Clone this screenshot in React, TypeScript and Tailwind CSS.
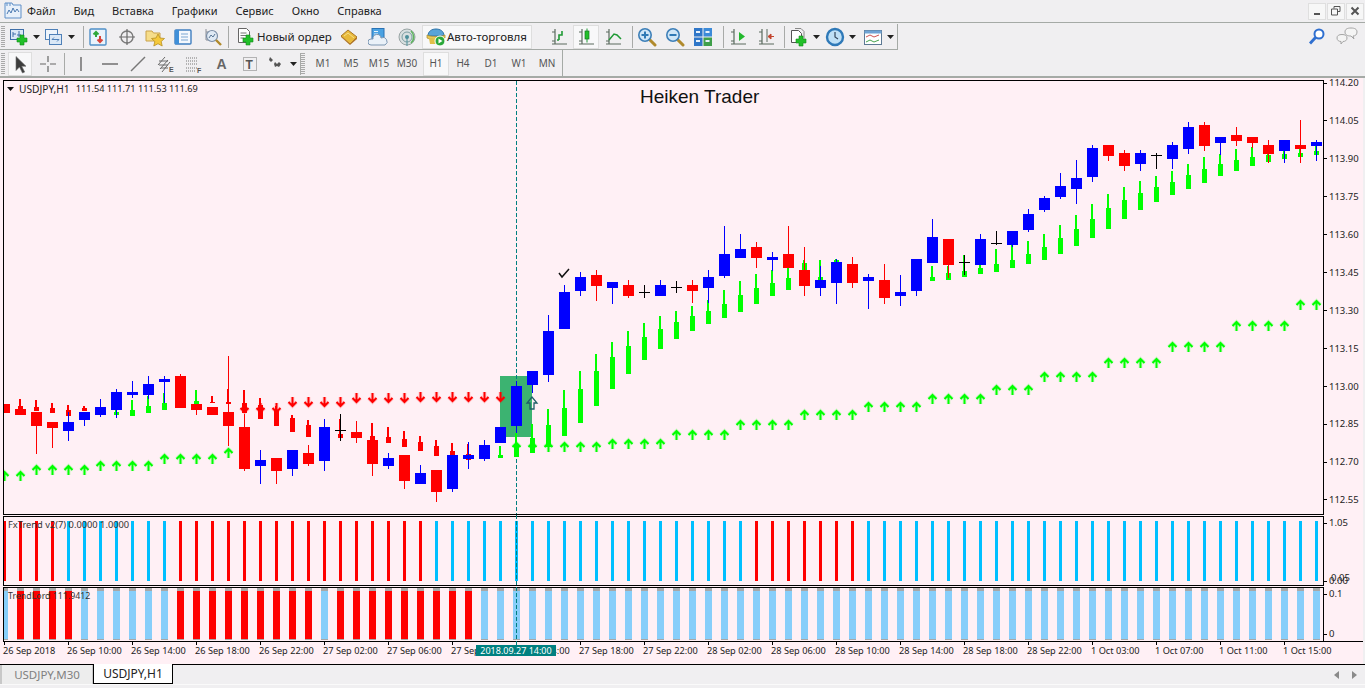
import type { ReactNode } from 'react'

const CHART_FONT = "font-['Noto_Sans',sans-serif]"

// [colour, body top, body bottom, wick top, wick bottom], index = bar number (x = 4 + 16k)
const BARS: [string, number, number, number, number][] = [
  ['r', 404, 413, 404, 413], ['r', 409, 415, 409, 415], ['r', 412, 426, 412, 454], ['r', 422, 428, 422, 448],
  ['b', 422, 431, 412, 441], ['b', 412, 420, 412, 426], ['b', 407, 415, 399, 417], ['b', 392, 410, 389, 418],
  ['b', 392, 395, 381, 398], ['b', 384, 395, 376, 399], ['b', 379, 382, 376, 403], ['r', 376, 408, 374, 408],
  ['r', 404, 410, 404, 415], ['r', 407, 415, 407, 415], ['r', 412, 426, 356, 446], ['r', 427, 469, 414, 471],
  ['b', 460, 466, 450, 484], ['r', 458, 471, 458, 484], ['b', 450, 469, 450, 476], ['r', 453, 464, 445, 466],
  ['b', 427, 461, 419, 471], ['d', 430, 430, 414, 441], ['r', 432, 438, 421, 443], ['r', 440, 464, 440, 476],
  ['b', 458, 466, 453, 469], ['r', 455, 481, 455, 489], ['b', 473, 484, 465, 484], ['r', 470, 492, 470, 502],
  ['b', 455, 489, 455, 492], ['b', 455, 459, 442, 469], ['b', 445, 459, 440, 461], ['b', 427, 443, 427, 443],
  ['b', 386, 426, 381, 433], ['b', 371, 385, 371, 393], ['b', 331, 375, 315, 382], ['b', 292, 329, 285, 329],
  ['b', 277, 291, 272, 296], ['r', 275, 286, 270, 301], ['b', 282, 288, 282, 304], ['r', 285, 296, 280, 298],
  ['d', 292, 292, 285, 298], ['b', 285, 296, 280, 296], ['d', 287, 287, 281, 293], ['r', 285, 291, 280, 303],
  ['b', 277, 288, 270, 303], ['b', 254, 276, 226, 278], ['b', 249, 258, 234, 258], ['r', 247, 258, 242, 268],
  ['b', 257, 260, 252, 271], ['r', 254, 268, 226, 268], ['r', 270, 286, 247, 296], ['b', 280, 288, 266, 296],
  ['b', 262, 283, 259, 304], ['r', 264, 283, 257, 288], ['b', 277, 281, 274, 309], ['r', 280, 298, 264, 304],
  ['b', 292, 296, 275, 306], ['b', 259, 291, 259, 296], ['b', 237, 263, 219, 263], ['r', 239, 265, 239, 278],
  ['d', 262, 262, 255, 275], ['b', 239, 265, 234, 265], ['d', 243, 243, 231, 245], ['b', 231, 245, 231, 247],
  ['b', 214, 230, 209, 232], ['b', 198, 210, 196, 212], ['b', 186, 197, 173, 199], ['b', 178, 189, 160, 204],
  ['b', 148, 177, 145, 182], ['r', 145, 156, 145, 161], ['r', 153, 166, 150, 171], ['b', 153, 164, 150, 171],
  ['d', 155, 155, 153, 169], ['b', 145, 159, 142, 169], ['b', 127, 149, 122, 154], ['r', 125, 146, 122, 151],
  ['b', 137, 143, 137, 155], ['r', 135, 141, 127, 146], ['r', 137, 143, 137, 148], ['r', 145, 154, 140, 163],
  ['b', 140, 151, 140, 163], ['r', 145, 149, 120, 163], ['b', 142, 146, 140, 161],
]

// smaller candles drawn under the main ones: [bar, colour, wick top, body top, body bottom]
const SMALL: [number, string, number, number, number][] = [
  [1, '#ff0000', 399, 406, 409], [2, '#ff0000', 400, 407, 411], [3, '#ff0000', 403, 408, 413], [4, '#ff0000', 405, 410, 416],
  [5, '#ff0000', 406, 408, 411], [7, '#00ff00', 410, 412, 415], [8, '#00ff00', 400, 410, 416], [9, '#00ff00', 396, 406, 413],
  [10, '#00ff00', 393, 403, 410], [12, '#00ff00', 390, 401, 405], [13, '#ff0000', 396, 402, 403], [14, '#ff0000', 389, 402, 404],
  [15, '#ff0000', 390, 403, 413], [16, '#ff0000', 398, 405, 419], [17, '#ff0000', 406, 410, 426], [18, '#ff0000', 415, 418, 432],
  [19, '#ff0000', 420, 425, 437], [21, '#ff0000', 419, 434, 438], [23, '#ff0000', 423, 436, 440], [24, '#ff0000', 427, 437, 443],
  [25, '#ff0000', 431, 439, 447], [26, '#ff0000', 436, 442, 451], [27, '#ff0000', 440, 446, 456], [28, '#ff0000', 443, 451, 455],
  [29, '#ff0000', 444, 454, 460], [31, '#00ff00', 446, 455, 458], [32, '#00ff00', 433, 445, 457], [33, '#00ff00', 424, 438, 453],
  [34, '#00ff00', 409, 425, 447], [35, '#00ff00', 390, 408, 436], [36, '#00ff00', 371, 389, 423], [37, '#00ff00', 354, 371, 406],
  [38, '#00ff00', 342, 357, 389], [39, '#00ff00', 331, 346, 374], [40, '#00ff00', 323, 337, 360], [41, '#00ff00', 316, 329, 349],
  [42, '#00ff00', 311, 322, 339], [43, '#00ff00', 306, 316, 331], [44, '#00ff00', 300, 311, 324], [45, '#00ff00', 290, 304, 318],
  [46, '#00ff00', 281, 295, 312], [47, '#00ff00', 274, 288, 304], [48, '#00ff00', 270, 283, 296], [49, '#00ff00', 268, 278, 290],
  [50, '#00ff00', 260, 263, 270], [51, '#00ff00', 260, 277, 280], [52, '#00ff00', 259, 260, 262], [58, '#00ff00', 266, 277, 281],
  [59, '#00ff00', 266, 273, 280], [60, '#00ff00', 255, 271, 277], [61, '#00ff00', 262, 268, 274], [62, '#00ff00', 249, 264, 272],
  [63, '#00ff00', 245, 260, 268], [64, '#00ff00', 241, 254, 264], [65, '#00ff00', 234, 247, 260], [66, '#00ff00', 225, 238, 254],
  [67, '#00ff00', 215, 229, 246], [68, '#00ff00', 204, 219, 238], [69, '#00ff00', 194, 208, 229], [70, '#00ff00', 187, 200, 219],
  [71, '#00ff00', 181, 193, 210], [72, '#00ff00', 176, 187, 202], [73, '#00ff00', 171, 182, 195], [74, '#00ff00', 164, 175, 189],
  [75, '#00ff00', 157, 169, 183], [76, '#00ff00', 154, 164, 176], [77, '#00ff00', 149, 160, 171], [78, '#00ff00', 147, 157, 166],
  [79, '#00ff00', 150, 155, 162], [80, '#00ff00', 150, 154, 159], [81, '#00ff00', 146, 153, 157], [82, '#00ff00', 146, 151, 155],
]

// [first bar, how many, y]
const UP_ARROWS: [number, number, number][] = [
  [0, 2, 476], [2, 4, 470], [6, 4, 466], [10, 4, 459], [14, 1, 453], [32, 6, 447], [38, 4, 444], [42, 4, 435], [46, 4, 425],
  [50, 4, 415], [54, 4, 407], [58, 4, 399], [62, 3, 390], [65, 4, 377], [69, 4, 363], [73, 4, 347], [77, 4, 326], [81, 2, 305],
]
const DOWN_ARROWS: [number, number, number][] = [[15, 3, 408], [18, 4, 402], [22, 4, 398], [26, 6, 397]]

const PRICES = ['114.20', '114.05', '113.90', '113.75', '113.60', '113.45', '113.30', '113.15', '113.00', '112.85', '112.70', '112.55']

const TIMES = [
  '26 Sep 2018', '26 Sep 10:00', '26 Sep 14:00', '26 Sep 18:00', '26 Sep 22:00', '27 Sep 02:00', '27 Sep 06:00',
  '27 Sep 10:00', '27 Sep 14:00', '27 Sep 18:00', '27 Sep 22:00', '28 Sep 02:00', '28 Sep 06:00', '28 Sep 10:00',
  '28 Sep 14:00', '28 Sep 18:00', '28 Sep 22:00', '1 Oct 03:00', '1 Oct 07:00', '1 Oct 11:00', '1 Oct 15:00',
]

const barIndexes = Array.from({ length: 83 }, (_, k) => k)
const expand = (list: [number, number, number][]) =>
  list.flatMap(([from, n, y]) => Array.from({ length: n }, (_, i) => [from + i, y]))

const fxIsRed = (k: number) => k <= 3 || (k >= 11 && k <= 26) || (k >= 47 && k <= 53)
const lordIsRed = (k: number) => (k >= 1 && k <= 4) || (k >= 11 && k <= 19) || (k >= 21 && k <= 29)

function Ico({ children, w = 20 }: { children: ReactNode; w?: number }) {
  return (
    <svg width={w} height="20" viewBox={`0 0 ${w} 20`} className="block shrink-0">
      {children}
    </svg>
  )
}

const Plus = ({ x = 9, y = 9 }: { x?: number; y?: number }) => (
  <path d={`M${x + 3} ${y}h4v3h3v4h-3v3h-4v-3h-3v-4h3z`} fill="#22c02a" stroke="#128a18" strokeWidth="0.6" />
)

const Axes = ({ color = '#5a6a5e' }: { color?: string }) => (
  <path d="M6 2v15M3 5h3M3 17h15M6 14H3" fill="none" stroke={color} strokeWidth="1.2" />
)

const Lens = ({ sign }: { sign: 'in' | 'out' }) => (
  <>
    <path d="M12 12l6 6" stroke="#b08a2c" strokeWidth="3" strokeLinecap="round" />
    <circle cx="8" cy="8" r="6.2" fill="#cfe6f7" stroke="#3d7fb8" strokeWidth="1.6" />
    <path d={sign === 'in' ? 'M4.5 8h7M8 4.5v7' : 'M4.5 8h7'} stroke="#2f79b5" strokeWidth="2" />
  </>
)

const ICONS: Record<string, ReactNode> = {
  app: (
    <Ico>
      <path d="M2 2h7l1 2h8v13H2z" fill="#e8f0fa" stroke="#5e8fc8" />
      <path d="M4 2v3M7 2v3" stroke="#5e8fc8" />
      <path d="M4 13l2-4 2 3 2-5 2 4 2-3 2 3" fill="none" stroke="#4a78b0" />
    </Ico>
  ),
  newChart: (
    <Ico>
      <rect x="1.5" y="2.5" width="13" height="10" fill="#dbe8f6" stroke="#3f6fa8" />
      <path d="M4 5v5M4 7H7M10 4v6M8 8h4" stroke="#3f6fa8" />
      <Plus x={8} y={8} />
    </Ico>
  ),
  profiles: (
    <Ico>
      <rect x="1.5" y="2.5" width="12" height="10" fill="#eef4fb" stroke="#4f80b8" />
      <rect x="5.5" y="7.5" width="12" height="10" fill="#dbe8f6" stroke="#4f80b8" />
      <path d="M8 12.5h7M8 12.5l2-2M15 12.5l-2 2" fill="none" stroke="#4f80b8" />
    </Ico>
  ),
  market: (
    <Ico>
      <rect x="2" y="2" width="16" height="16" rx="1" fill="#eaf3fb" stroke="#4f90c8" strokeWidth="1.4" />
      <path d="M8 10V5M5.5 7.5L8 5l2.5 2.5" fill="none" stroke="#2fa83a" strokeWidth="2" />
      <path d="M12 9v6M9.5 12.5L12 15l2.5-2.5" fill="none" stroke="#d8433a" strokeWidth="2" />
    </Ico>
  ),
  cross: (
    <Ico>
      <circle cx="10" cy="10" r="6" fill="none" stroke="#7b7b7b" strokeWidth="1.4" />
      <path d="M10 2v16M2 10h16" stroke="#6a6a6a" strokeWidth="1.2" />
    </Ico>
  ),
  folder: (
    <Ico>
      <path d="M1 4h6l1.500 2H15v8H1z" fill="#f6dd8a" stroke="#c9a24a" />
      <path d="M13 7l2 4 4.500.5-3.300 3 1 4.500L13 16.700 8.800 19l1-4.500-3.300-3L11 11z" fill="#f5c93c" stroke="#b88f22" strokeWidth=".8" />
    </Ico>
  ),
  book: (
    <Ico>
      <rect x="2" y="3" width="16" height="14" rx="1" fill="#f4f8fd" stroke="#3f7fc0" strokeWidth="1.4" />
      <rect x="2" y="3" width="4" height="14" fill="#3f8fd8" />
      <path d="M8 7h7M8 10h7M8 13h7" stroke="#7aa6d2" />
    </Ico>
  ),
  chartMag: (
    <Ico>
      <path d="M4 2v11h10M4 5h10" fill="none" stroke="#8b8f98" />
      <circle cx="10" cy="9" r="5.500" fill="#dfe9f4" stroke="#7b8ea6" strokeWidth="1.2" />
      <path d="M7 11l2-3 2 2 2-3" fill="none" stroke="#5a7796" />
      <path d="M14 13l5 5" stroke="#b08a2c" strokeWidth="2.400" />
    </Ico>
  ),
  order: (
    <Ico>
      <path d="M3.500 1.500h8l3 3v11h-11z" fill="#fff" stroke="#666" />
      <path d="M5.500 6h6M5.500 8.500h6M5.500 11h3" stroke="#777" />
      <Plus x={8} y={8} />
    </Ico>
  ),
  gold: (
    <Ico>
      <path d="M2 9l7-6 9 7-7 7z" fill="#e8b93a" stroke="#a9772a" />
      <path d="M2 9l9 8 7-7v2l-7 6-9-8z" fill="#b4782c" />
      <path d="M5 9l4-3 6 5" fill="none" stroke="#f6de8a" />
    </Ico>
  ),
  server: (
    <Ico>
      <rect x="4" y="1.500" width="12" height="11" fill="#4ba2e2" stroke="#2a72b4" />
      <path d="M6 4.500h4M6 7h4M6 9.500h4" stroke="#e6f3fc" />
      <path d="M3 18a3 3 0 0 1 0-6h2a4 4 0 0 1 8-1 3.500 3.500 0 0 1 4 7z" fill="#eaf1f8" stroke="#7c97b3" />
    </Ico>
  ),
  signal: (
    <Ico>
      <circle cx="10" cy="10" r="8" fill="#d8dfe0" stroke="#98a4a4" />
      <circle cx="10" cy="10" r="5" fill="none" stroke="#7c9ea2" />
      <circle cx="10" cy="10" r="2" fill="#4c8f9a" />
      <path d="M14 4a8 8 0 0 1 0 12" fill="none" stroke="#5eb55e" strokeWidth="1.600" />
      <path d="M10 11v8" stroke="#4c8f9a" />
    </Ico>
  ),
  auto: (
    <Ico>
      <path d="M2 9C2 4 6 2 10 2s8 2 8 7z" fill="#58a4d8" stroke="#2f73a8" />
      <path d="M1 8c4 2 14 2 18 0v3c-4 2-14 2-18 0z" fill="#e9c956" stroke="#a8892a" strokeWidth=".7" />
      <path d="M3 11l1 6h7v-5z" fill="#e0c04a" />
      <circle cx="14" cy="14" r="5" fill="#2aa83a" stroke="#fff" />
      <path d="M12.500 11.500l4 2.500-4 2.500z" fill="#fff" />
    </Ico>
  ),
  bars: (
    <Ico>
      <Axes />
      <path d="M10 13V8h3V4" fill="none" stroke="#1f9a35" strokeWidth="1.600" />
      <path d="M10 13H8" stroke="#1f9a35" strokeWidth="1.600" />
    </Ico>
  ),
  candles: (
    <Ico>
      <Axes />
      <path d="M11 1.500v14" stroke="#1f9a35" />
      <rect x="9" y="4" width="4" height="8" fill="#22c02a" stroke="#157a20" strokeWidth=".7" />
    </Ico>
  ),
  line: (
    <Ico>
      <Axes />
      <path d="M6 13l5-6 3 1 4 4" fill="none" stroke="#1f9a35" strokeWidth="1.500" />
    </Ico>
  ),
  zoomIn: <Ico><Lens sign="in" /></Ico>,
  zoomOut: <Ico><Lens sign="out" /></Ico>,
  grid: (
    <Ico>
      <rect x="1" y="1" width="8.500" height="8.500" fill="#2f76c8" />
      <rect x="10.500" y="1" width="8.500" height="8.500" fill="#3c8ad8" />
      <rect x="1" y="10.500" width="8.500" height="8.500" fill="#2f76c8" />
      <rect x="10.500" y="10.500" width="8.500" height="8.500" fill="#3f9f4a" />
      <path d="M3 4h4v2H3zM12.500 4h4v2h-4zM3 13h4v2H3zM12.500 13h4v2h-4z" fill="#e9f2fb" />
    </Ico>
  ),
  shift: (
    <Ico>
      <Axes />
      <path d="M11 5l6 4.500-6 4.500z" fill="#22b82c" />
    </Ico>
  ),
  scroll: (
    <Ico>
      <Axes />
      <path d="M11 2v13" stroke="#5a6a5e" />
      <path d="M18 9.500h-4M17 9.500l-4 0M15 7l-3 2.500 3 2.500z" stroke="#c2452e" fill="#c2452e" />
    </Ico>
  ),
  docPlus: (
    <Ico>
      <path d="M2.500 3.500h7l3 3v9h-10z" fill="#fff" stroke="#555" />
      <path d="M6 1.500h6l3 3v7" fill="none" stroke="#888" />
      <Plus x={7} y={9} />
    </Ico>
  ),
  clock: (
    <Ico>
      <circle cx="10" cy="10" r="8" fill="#bfe0f6" stroke="#2f79b8" strokeWidth="2.400" />
      <path d="M10 5v5l3 2" fill="none" stroke="#35475c" strokeWidth="1.200" />
    </Ico>
  ),
  template: (
    <Ico>
      <rect x="1.500" y="3.500" width="17" height="14" fill="#fff" stroke="#5c7994" />
      <rect x="1.500" y="3.500" width="17" height="3" fill="#6fa3d4" />
      <path d="M3 10l4-2 4 2 5-2" fill="none" stroke="#d05252" />
      <path d="M3 15l4-2 4 2 5-2" fill="none" stroke="#46a24e" />
    </Ico>
  ),
  arrow: (
    <Ico>
      <path d="M6 2.500v14l3.500-3.500 3 6 2.200-1-3-5.800H16z" fill="#3c3c3c" stroke="#6a6a6a" strokeWidth=".6" />
    </Ico>
  ),
  plusCross: (
    <Ico>
      <path d="M10 2v6M10 12v6M2 10h6M12 10h6" stroke="#666" strokeWidth="1.200" />
    </Ico>
  ),
  vline: <Ico><path d="M10 3v14" stroke="#666" strokeWidth="1.400" /></Ico>,
  hline: <Ico><path d="M2 10h16" stroke="#666" strokeWidth="1.400" /></Ico>,
  trend: <Ico><path d="M3 17L17 3" stroke="#777" strokeWidth="1.400" /></Ico>,
  channel: (
    <Ico>
      <path d="M2 11l7-8M4 15l8-9M6 18l8-10M3 7h9M3 11h9M5 14h7" stroke="#6a6a6a" />
      <text x="13" y="18" fontSize="7" fontWeight="700" fill="#555" fontFamily="Liberation Sans, sans-serif">E</text>
    </Ico>
  ),
  fib: (
    <Ico>
      <path d="M2 4h12M2 7h12M2 10h12M2 14h12M2 17h9" stroke="#777" strokeDasharray="1 1" />
      <text x="13" y="19" fontSize="7" fontWeight="700" fill="#555" fontFamily="Liberation Sans, sans-serif">F</text>
    </Ico>
  ),
  letter: (
    <Ico>
      <text x="4.500" y="15" fontSize="14" fontWeight="700" fill="#666" fontFamily="Liberation Sans, sans-serif">A</text>
    </Ico>
  ),
  textBox: (
    <Ico>
      <rect x="3.500" y="3.500" width="13" height="13" fill="none" stroke="#777" strokeDasharray="1 1" />
      <text x="5.500" y="15" fontSize="12" fontWeight="700" fill="#555" fontFamily="Liberation Sans, sans-serif">T</text>
    </Ico>
  ),
  marks: (
    <Ico>
      <path d="M4 3l3 3-2 2-2-2zM9 8l2 2 2-2 2 2-2 3-2-1-2 1-1-3z" fill="#555" />
    </Ico>
  ),
  search: (
    <Ico>
      <circle cx="12" cy="7" r="4.500" fill="#fff" stroke="#2f6fd0" strokeWidth="2" />
      <path d="M8.500 10.500L3 16.500" stroke="#2f6fd0" strokeWidth="2.800" />
    </Ico>
  ),
  chat: (
    <Ico w={24}>
      <path d="M9 5c0-3 2.500-4 6-4s6 1 6 4-2 4-4 4l1 3-3-3c-3.500 0-6-1-6-4z" fill="#f4f4f4" stroke="#a5a5a5" />
      <path d="M1 11c0-2.500 2-3.500 5-3.500s5 1 5 3.500-2 3.500-4 3.500l-2 2.500v-2.500c-2 0-4-1-4-3.500z" fill="#f4f4f4" stroke="#a5a5a5" />
    </Ico>
  ),
}

function Caret() {
  return (
    <svg width="7" height="4" viewBox="0 0 7 4" className="block shrink-0">
      <path d="M0 0h7L3.500 4z" fill="#222" />
    </svg>
  )
}

function Grip() {
  return <span className="h-[22px] w-[4px] shrink-0 bg-[repeating-linear-gradient(to_bottom,#a9a9a9_0_1px,transparent_1px_2px)]" />
}

function Sep({ className = '' }: { className?: string }) {
  return <span className={`h-[22px] w-px shrink-0 bg-[#a8aaa8] ${className}`} />
}

function Btn({ name, w = 28, caret, pressed, text }: { name?: string; w?: number; caret?: boolean; pressed?: boolean; text?: string }) {
  return (
    <div
      style={{ width: w }}
      className={`flex h-[24px] shrink-0 items-center justify-center gap-[2px] ${pressed ? 'border border-[#dedede] bg-[#f8f8f9]' : ''}`}
    >
      {name && ICONS[name]}
      {text && <span className="whitespace-nowrap text-[12px] leading-none text-[#222]">{text}</span>}
      {caret && <span className="ml-[2px]"><Caret /></span>}
    </div>
  )
}

function Period({ label, pressed, w = 28 }: { label: string; pressed?: boolean; w?: number }) {
  return (
    <div
      style={{ width: w }}
      className={`flex h-[24px] shrink-0 items-center justify-center text-[10px] text-[#555] ${pressed ? 'border border-[#dedede] bg-[#f8f8f9]' : ''}`}
    >
      {label}
    </div>
  )
}

function WinBtn({ children }: { children: ReactNode }) {
  return <div className="flex h-[17px] w-[18px] items-center justify-center border border-[#dfdfdf] bg-[#f7f7f7]">{children}</div>
}

function Arrow({ k, y, dir }: { k: number; y: number; dir: 'up' | 'down' }) {
  const x = 4.5 + 16 * k
  const s = dir === 'up' ? 1 : -1
  const color = dir === 'up' ? '#00ff00' : '#ff0000'
  const d = `M${x} ${y + 5 * s}V${y - 4 * s}M${x - 4} ${y}L${x} ${y - 4 * s}L${x + 4} ${y}`
  return (
    <g fill="none">
      <path d={d} stroke={color} strokeOpacity="0.15" strokeWidth="4" />
      <path d={d} stroke={color} strokeWidth="2" />
    </g>
  )
}

function PriceChart() {
  return (
    <svg width="1319" height="433" viewBox="4 81 1319 433" className="block">
      <rect x="500" y="376" width="32" height="61" fill="#3cb371" />
      {/* crosshair stays behind the candles on this pane */}
      <line x1="516.5" y1="81" x2="516.5" y2="514" stroke="#008080" strokeDasharray="4 2" />
      {SMALL.map(([k, color, wt, bt, bb]) => (
        <g key={k} fill={color} shapeRendering="crispEdges">
          <rect x={3 + 16 * k} y={wt} width="2" height={bt - wt} />
          <rect x={2 + 16 * k} y={bt} width="5" height={bb - bt} />
        </g>
      ))}
      {expand(UP_ARROWS).map(([k, y]) => <Arrow key={k} k={k} y={y} dir="up" />)}
      {expand(DOWN_ARROWS).map(([k, y]) => <Arrow key={k} k={k} y={y} dir="down" />)}
      {BARS.map(([c, bt, bb, wt, wb], k) => {
        const color = c === 'r' ? '#ff0000' : c === 'b' ? '#0000ff' : '#000000'
        return (
          <g key={k} fill={color} shapeRendering="crispEdges">
            <rect x={4 + 16 * k} y={wt} width="1" height={wb - wt} />
            <rect x={-1 + 16 * k} y={bt} width="11" height={Math.max(bb - bt, 1)} />
          </g>
        )
      })}
      <path d="M532 397l-5 6h3v6h4v-6h3z" fill="none" stroke="#1f5f66" strokeWidth="1.300" />
      <path d="M559 273l3 4 7-8" fill="none" stroke="#111" strokeWidth="1.500" />
    </svg>
  )
}

function FxChart() {
  return (
    <svg width="1319" height="68" viewBox="4 517 1319 68" className="block">
      {barIndexes.map((k) => (
        <rect key={k} x={3 + 16 * k} y="521" width="3" height="60" fill={fxIsRed(k) ? '#ff0000' : '#00bfff'} shapeRendering="crispEdges" />
      ))}
    </svg>
  )
}

function LordChart() {
  return (
    <svg width="1319" height="52" viewBox="4 588 1319 52" className="block">
      {barIndexes.map((k) => (
        <g key={k} shapeRendering="crispEdges">
          <rect x={1 + 16 * k} y="588" width="7" height="52" fill={lordIsRed(k) ? '#ff0000' : '#87cefa'} />
          <rect x={1 + 16 * k} y="588" width="7" height="3" fill="#a8a8a8" />
          <rect x={1 + 16 * k} y="639" width="7" height="1" fill="#a8a8a8" />
        </g>
      ))}
    </svg>
  )
}

function Tick({ children }: { children: ReactNode }) {
  return (
    <div className="flex h-[12px] items-center">
      <span className="h-px w-[3px] shrink-0 bg-black" />
      <span className="pl-[2px] text-[9.5px] leading-none text-[#222]">{children}</span>
    </div>
  )
}

export default function App() {
  return (
    <div className={`flex h-[688px] w-[1365px] flex-col overflow-hidden bg-[#f0eff1] ${CHART_FONT}`}>
      {/* menu */}
      <div className="flex h-[23px] shrink-0 items-center border-b border-[#a5aaa6] pl-[3px]">
        <span className="mr-[4px]">{ICONS.app}</span>
        <div className="flex gap-[18px] text-[11px] text-[#222]">
          {['Файл', 'Вид', 'Вставка', 'Графики', 'Сервис', 'Окно', 'Справка'].map((m) => <span key={m}>{m}</span>)}
        </div>
        <div className="ml-auto mr-px flex gap-px">
          <WinBtn><span className="mt-[6px] h-[2px] w-[6px] bg-[#555]" /></WinBtn>
          <WinBtn>
            <svg width="10" height="10" viewBox="0 0 10 10"><path d="M3 2.500V.5h6v5H7M.5 3h6v6h-6z" fill="none" stroke="#555" /></svg>
          </WinBtn>
          <WinBtn>
            <svg width="10" height="10" viewBox="0 0 10 10"><path d="M1.500 1.500l7 7M8.500 1.500l-7 7" stroke="#555" strokeWidth="2" /></svg>
          </WinBtn>
        </div>
      </div>

      {/* main toolbar */}
      <div className="mt-px flex h-[26px] shrink-0 items-center">
        <div className="flex h-[26px] w-[898px] shrink-0 items-center border-r border-b border-[#a5aaa6] pl-[1px]">
          <Grip />
          <span className="ml-[3px]"><Btn name="newChart" w={32} caret /></span>
          <span className="ml-[1px]"><Btn name="profiles" w={36} caret /></span>
          <Sep className="ml-[6px]" />
          <Btn name="market" />
          <Btn name="cross" w={29} />
          <Btn name="folder" w={27} />
          <Btn name="book" w={29} />
          <Btn name="chartMag" w={29} />
          <Sep className="ml-[2px]" />
          <div className="flex h-[24px] w-[106px] shrink-0 items-center pl-[6px]">
            {ICONS.order}
            <span className="ml-[2px] whitespace-nowrap text-[11.5px] text-[#222]">Новый ордер</span>
          </div>
          <Btn name="gold" w={28} />
          <Btn name="server" w={30} />
          <Btn name="signal" w={28} />
          <div className="ml-[1px] flex h-[24px] w-[110px] shrink-0 items-center border border-[#dedede] bg-[#f8f8f9] pl-[3px]">
            {ICONS.auto}
            <span className="ml-[1px] whitespace-nowrap text-[11.5px] text-[#222]">Авто-торговля</span>
          </div>
          <span className="ml-[6px]"><Grip /></span>
          <span className="ml-[8px]"><Btn name="bars" w={26} /></span>
          <span className="ml-[1px]"><Btn name="candles" w={26} pressed /></span>
          <Btn name="line" w={28} />
          <Sep className="ml-[5px]" />
          <Btn name="zoomIn" />
          <Btn name="zoomOut" />
          <Btn name="grid" />
          <Sep className="ml-[6px]" />
          <Btn name="shift" />
          <Btn name="scroll" />
          <Sep className="ml-[4px]" />
          <span className="ml-[1px]"><Btn name="docPlus" w={36} caret /></span>
          <Btn name="clock" w={37} caret />
          <span className="ml-[1px]"><Btn name="template" w={36} caret /></span>
        </div>
        <div className="ml-auto flex items-center pr-[5px]">
          <span className="mr-[9px]">{ICONS.search}</span>
          {ICONS.chat}
        </div>
      </div>

      {/* drawing + period toolbar */}
      <div className="flex h-[28px] shrink-0 border-b-2 border-[#a5aaa6]">
        <div className="flex h-[26px] w-[563px] shrink-0 items-center border-r border-[#a5aaa6] pl-[1px] pt-px">
          <Grip />
          <span className="ml-[3px]"><Btn name="arrow" w={24} pressed /></span>
          <span className="ml-[2px]"><Btn name="plusCross" w={28} /></span>
          <Sep className="ml-[2px]" />
          <span className="ml-[1px]"><Btn name="vline" w={30} /></span>
          <Btn name="hline" />
          <Btn name="trend" />
          <Btn name="channel" />
          <Btn name="fib" />
          <Btn name="letter" />
          <Btn name="textBox" />
          <Btn name="marks" w={35} caret />
          <Sep className="ml-[1px]" />
          <Grip />
          <span className="ml-[4px]"><Period label="M1" /></span>
          <Period label="M5" />
          <Period label="M15" />
          <Period label="M30" />
          <span className="ml-[2px]"><Period label="H1" pressed w={26} /></span>
          <Period label="H4" />
          <Period label="D1" />
          <Period label="W1" />
          <Period label="MN" />
        </div>
      </div>

      {/* chart window */}
      <div className="relative mr-[2px] flex h-[586px] shrink-0 flex-col bg-[#fff0f5] pl-[3px] pt-[2px]">
        <div className="flex h-[435px]">
          <div className="relative w-[1321px] shrink-0 overflow-hidden border border-black">
            <PriceChart />
            <div className="absolute left-[3px] top-[2px] flex items-center leading-[12px] text-[#222]">
              <svg width="7" height="4" viewBox="0 0 7 4" className="mr-[5px]"><path d="M0 0h7L3.500 4z" fill="#111" /></svg>
              <span className="text-[10.2px]">USDJPY,H1</span>
              <span className="ml-[6px] text-[9.2px]">111.54 111.71 111.53 111.69</span>
            </div>
            <div className="absolute left-[636px] top-[5px] font-['Liberation_Sans',sans-serif] text-[19px] leading-[22px] text-[#111]">Heiken Trader</div>
          </div>
          <div className="-mt-[3px] flex h-[429px] flex-col justify-between">
            {PRICES.map((p) => <Tick key={p}>{p}</Tick>)}
          </div>
        </div>

        <div className="mt-px flex h-[70px]">
          <div className="relative w-[1321px] shrink-0 overflow-hidden border border-black">
            <FxChart />
            <div className="absolute left-[4px] top-[2px] text-[9.3px] leading-[12px] text-[#333]">FxTrend v2(7) 0.0000 1.0000</div>
          </div>
          <div className="relative -mb-px flex flex-1 flex-col justify-between pt-px">
            <Tick>1.05</Tick>
            <Tick>0.00</Tick>
            <span className="absolute left-[7px] top-[56px] text-[9.5px] leading-[12px] text-[#222]">0.05</span>
          </div>
        </div>

        <div className="mt-px flex h-[54px]">
          <div className="relative w-[1321px] shrink-0 overflow-hidden border border-b-0 border-black">
            <LordChart />
            <div className="absolute left-[4px] top-[2px] text-[8.8px] leading-[12px] text-[#333]">TrendLord 111.9412</div>
          </div>
          <div className="flex flex-1 flex-col justify-between py-px">
            <Tick>0.1</Tick>
            <Tick>0</Tick>
          </div>
        </div>

        {/* time axis */}
        <div className="flex h-[23px] shrink-0 border-t border-black pl-px">
          {TIMES.map((t) => (
            <div key={t} className="w-[64px] shrink-0">
              <div className="h-[3px] w-px bg-black" />
              <div className="-ml-px whitespace-nowrap text-[9.2px] leading-[12px] text-[#222]">{t}</div>
            </div>
          ))}
        </div>

        {/* crosshair over the indicator panes */}
        <div className="absolute left-[516px] top-[437px] h-[141px] w-px bg-[repeating-linear-gradient(to_bottom,#008080_0_4px,transparent_4px_6px)]" />
        <div className="absolute left-[476px] top-[567px] flex h-[11px] w-[80px] items-center justify-center bg-[#008080] text-[9px] leading-none text-white">
          2018.09.27 14:00
        </div>
      </div>

      {/* tabs */}
      <div className="flex h-[20px] shrink-0 border-t border-black">
        <div className="flex w-[93px] items-center justify-center border-r border-l-2 border-[#c8c8c8] bg-[#ededed] text-[11.5px] leading-none text-[#808080]">USDJPY,M30</div>
        <div className="-mt-px flex w-[80px] items-center justify-center border border-t-0 border-black bg-white text-[12px] leading-none text-[#222]">USDJPY,H1</div>
        <div className="ml-auto flex items-center gap-[13px] pr-[8px]">
          <svg width="5" height="8" viewBox="0 0 5 8"><path d="M5 0v8L0 4z" fill="#8a8a8a" /></svg>
          <svg width="5" height="8" viewBox="0 0 5 8"><path d="M0 0v8l5-4z" fill="#8a8a8a" /></svg>
        </div>
      </div>
      <div className="h-px bg-[#fafafa]" />
    </div>
  )
}
